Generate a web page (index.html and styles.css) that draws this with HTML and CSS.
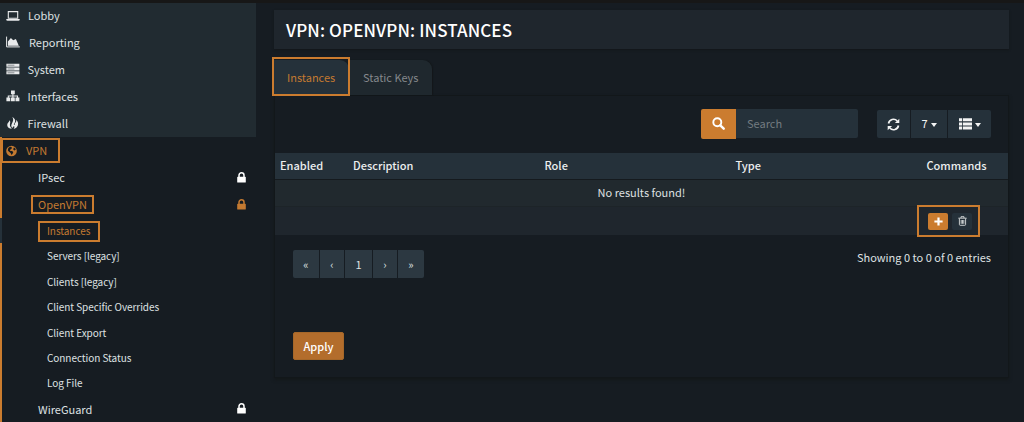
FILE: index.html
```html
<!DOCTYPE html>
<html lang="en">
<head>
<meta charset="utf-8">
<title>VPN: OpenVPN: Instances</title>
<link rel="stylesheet" href="styles.css">
</head>
<body>
<div class="app">
  <nav class="sidebar">
    <ul class="menu">
      <li class="item item-lobby"><svg class="icon" viewBox="0 0 14 12"><path d="M2.3 1.6h9.4v6.6H2.3z" fill="none" stroke="currentColor" stroke-width="1.1"/><path d="M.3 9h13.4v.8q0 .9-1.2.9h-11q-1.2 0-1.2-.9z" fill="currentColor"/></svg><span>Lobby</span></li>
      <li class="item item-reporting"><svg class="icon" viewBox="0 0 14 12"><path d="M.6 .6v10.3h13.2" fill="none" stroke="currentColor" stroke-width="1"/><path d="M1.9 9.7V5.600l3-3.700 2.300 2.300 2.700-1.200 2.900 6.700z" fill="currentColor"/></svg><span>Reporting</span></li>
      <li class="item item-system"><svg class="icon" viewBox="0 0 14 12"><path d="M.4.7h13v3H.4zM.4 4.500h13v3H.4zM.4 8.300h13v3H.4z" fill="currentColor"/><path d="M1.600 2.200h6.800M1.600 6h6.800M1.600 9.800h6.800" stroke="#222b31" stroke-width=".5"/></svg><span>System</span></li>
      <li class="item item-interfaces"><svg class="icon" viewBox="0 0 14 12"><path d="M5 .6h3.800v3.700H5zM.4 7.500h3.900v3.700H.4zM5 7.500h3.800v3.700H5zM9.500 7.500h3.900v3.700H9.500z" fill="currentColor"/><path d="M6.900 4v4M2.300 8V6h9.200v2" fill="none" stroke="currentColor" stroke-width="1.100"/></svg><span>Interfaces</span></li>
      <li class="item item-firewall"><svg class="icon" viewBox="0 0 14 12"><path d="M6.300 0C8.500 1.300 9.800 3 9 5 8.500 6.300 7.500 7 8 8.300c.8-.5 1.100-1.200.9-2.200C10.200 5.200 10.600 4 10.100 2.700c1.700 1.300 2.400 3.500 1.800 5.500-.6 2-2.300 3.300-4.400 3.700 1-1.100 1.100-2 .5-3-.5.700-1.300.9-1.500 2.100C5 10 5 8.200 5.800 6.700 7 4.600 8 2.500 6.300 0z" fill="currentColor"/><path d="M3.400 3.300c1.500 1.500.6 2.800.5 4.300-.1 1.600.8 2.900 2 4.200C3.200 11.600 1.200 10.200 1.200 7.900c0-1.900 2.200-2.700 2.200-4.600z" fill="currentColor"/></svg><span>Firewall</span></li>
    </ul>
    <ul class="open-section">
      <li class="item item-vpn active"><svg class="icon" viewBox="0 0 14 12"><circle cx="5.500" cy="6" r="5.300" fill="currentColor"/><path d="M2.300 3l1.700-1.200 1.400.3.600 1-1 1.100-1.200.9.600.8 1.600.1 1.300 1.100-.7 1.600-1.100 1.200-.9-1.800-1.800-1.700-1-.9zM7.600 2.700l1.300.1.900 1.800-1.100.8-1.400-.7z" fill="#161c22"/></svg><span>VPN</span></li>
      <li class="sub">IPsec<svg class="lock" viewBox="0 0 9 11"><path d="M2 5V3.300a2.500 2.500 0 0 1 5 0V5" fill="none" stroke="currentColor" stroke-width="1.500"/><rect x=".2" y="4.800" width="8.600" height="5.700" rx=".6" fill="currentColor"/></svg></li>
      <li class="sub active">OpenVPN<svg class="lock" viewBox="0 0 9 11"><path d="M2 5V3.300a2.500 2.500 0 0 1 5 0V5" fill="none" stroke="currentColor" stroke-width="1.500"/><rect x=".2" y="4.800" width="8.600" height="5.700" rx=".6" fill="currentColor"/></svg></li>
      <li class="leaf active current">Instances</li>
      <li class="leaf">Servers [legacy]</li>
      <li class="leaf">Clients [legacy]</li>
      <li class="leaf">Client Specific Overrides</li>
      <li class="leaf">Client Export</li>
      <li class="leaf">Connection Status</li>
      <li class="leaf">Log File</li>
      <li class="sub">WireGuard<svg class="lock" viewBox="0 0 9 11"><path d="M2 5V3.300a2.500 2.500 0 0 1 5 0V5" fill="none" stroke="currentColor" stroke-width="1.500"/><rect x=".2" y="4.800" width="8.600" height="5.700" rx=".6" fill="currentColor"/></svg></li>
    </ul>
  </nav>
  <main class="main">
    <header class="page-head"><h1>VPN: OPENVPN: INSTANCES</h1></header>
    <div class="tabs"><div class="tab tab-on">Instances</div><div class="tab tab-off">Static Keys</div></div>
    <section class="panel">
      <div class="toolbar">
        <div class="search">
          <span class="search-btn"><svg width="13" height="13" viewBox="0 0 13 13"><circle cx="5.300" cy="5.300" r="4" fill="none" stroke="currentColor" stroke-width="1.900"/><path d="M8.300 8.300l3.400 3.400" stroke="currentColor" stroke-width="2.400" stroke-linecap="round"/></svg></span>
          <span class="search-field">Search</span>
        </div>
        <div class="actions">
          <span class="act act-refresh"><svg width="13" height="13" viewBox="0 0 13 13"><path d="M1.500 5.500A5 5 0 0 1 10.200 3M11.500 7.500A5 5 0 0 1 2.800 10" fill="none" stroke="currentColor" stroke-width="1.700"/><path d="M12.300.7v4.400H7.900zM.7 12.300V7.900h4.400z" fill="currentColor"/></svg></span>
          <span class="act act-rows"><span>7</span><i class="caret"></i></span>
          <span class="act act-cols"><svg width="13" height="12" viewBox="0 0 13 12"><path d="M0 .2h3.200v3H0zM4 .2h9v3H4zM0 4.400h3.200v3H0zM4 4.400h9v3H4zM0 8.600h3.200v3H0zM4 8.600h9v3H4z" fill="currentColor"/></svg><i class="caret"></i></span>
        </div>
      </div>
      <div class="row row-head"><span>Enabled</span><span>Description</span><span>Role</span><span>Type</span><span>Commands</span></div>
      <div class="row-empty">No results found!</div>
      <div class="row-foot">
        <span class="mini mini-add"><svg width="9" height="9" viewBox="0 0 9 9"><path d="M4.500.4v8.200M.4 4.500h8.200" stroke="currentColor" stroke-width="2.200"/></svg></span>
        <span class="mini mini-del"><svg width="9" height="10" viewBox="0 0 9 10"><path d="M.3 2.200h8.400M3 2V.7h3V2M1.400 2.500v6q0 .8.800.8h4.600q.8 0 .8-.8v-6M3.200 4v3.800M4.500 4v3.800M5.800 4v3.800" fill="none" stroke="currentColor" stroke-width=".9"/></svg></span>
      </div>
      <div class="footer">
        <div class="pager"><span class="pg pg-edge">«</span><span class="pg pg-step">‹</span><span class="pg pg-num">1</span><span class="pg pg-step">›</span><span class="pg pg-edge">»</span></div>
        <div class="info">Showing 0 to 0 of 0 entries</div>
      </div>
      <button class="apply">Apply</button>
    </section>
  </main>
  <i class="mark mark-vpn"></i>
  <i class="mark mark-openvpn"></i>
  <i class="mark mark-leaf"></i>
  <i class="mark mark-tab"></i>
  <i class="mark mark-commands"></i>
</div>
</body>
</html>
```
FILE: styles.css
```css
* { box-sizing: border-box; }
body {
  margin: 0;
  background: #161c22;
  color: #dfe1e2;
  font: 11px/16px "Noto Sans CJK SC", "Noto Sans", sans-serif;
}
ul { list-style: none; margin: 0; padding: 0; }
.app {
  position: relative;
  display: flex;
  width: 1024px;
  height: 422px;
  overflow: hidden;
  border-top: 3px solid #171717;
}
.sidebar { width: 257px; flex: none; }
.menu { background: #212b31; height: 134px; width: 256px; }
.item { display: flex; align-items: center; height: 27px; padding: 0 0 1px 6px; }
.menu .item:first-child { height: 26px; }
.item span { padding-bottom: 1px; }
.icon { width: 14px; height: 12px; flex: none; margin-right: 8px; color: #e8eaeb; }
.item-reporting .icon { margin-right: 9px; }
.item-interfaces .icon, .item-firewall .icon, .item-system .icon { margin-right: 7.500px; }
.open-section { border-left: 2px solid #cb7c2f; height: 288px; background: #161c22; }
.item-vpn { padding: 0 0 0 4px; height: 27px; }
.item-vpn .icon { margin-right: 6px; }
.active, .active .icon { color: #c47a31; }
.sub { display: flex; align-items: center; justify-content: space-between; height: 27px; padding: 0 11px 1px 36px; }
.lock { width: 9px; height: 11px; color: #fff; }
.active .lock { color: #c47a31; }
.leaf { height: 25.400px; line-height: 25.400px; padding-left: 45px; font-size: 10px; letter-spacing: -.06px; }
.current { margin-left: -2px; padding-left: 45px; border-left: 2px solid #25313a; }

.main { flex: 1; padding: 7px 15px 0 17px; }
.page-head { height: 39px; background: #1f262d; padding-left: 12px; box-shadow: 0 1px 2px #13171a; }
h1 { margin: 0; font-size: 17px; letter-spacing: .12px; line-height: 39px; font-weight: 500; color: #fff; }
.tabs { display: flex; margin-top: 11px; height: 35px; }
.tab { line-height: 35px; font-size: 11px; border-top-right-radius: 9px; }
.tab-on { width: 75px; padding-left: 13px; background: #25313a; color: #c47a31; }
.tab-off { width: 83px; padding-left: 14px; background: #1f282e; color: #85898c; box-shadow: 1px 0 1px #13171a; }
.panel { width: 735px; height: 283px; border: 1px solid #12171a; box-shadow: 0 2px 3px #14181a; }
.toolbar { display: flex; justify-content: flex-end; height: 57px; padding: 13px 17px 0 0; }
.search { display: flex; height: 29px; margin-right: 19px; }
.search-btn { display: flex; align-items: center; justify-content: center; width: 35px; height: 30px; margin-top: -.5px; background: #cb7c2f; color: #fff; border-radius: 2px 0 0 2px; }
.search-field { width: 122px; padding-left: 11px; background: #25313a; color: #737b80; line-height: 28px; border-radius: 0 2px 2px 0; }
.actions { display: flex; gap: 1px; height: 28px; margin-top: 1px; }
.act { display: flex; align-items: center; justify-content: center; background: #25313a; color: #f3f4f4; }
.act-refresh { width: 33px; border-radius: 2px 0 0 2px; }
.act-rows { width: 36px; }
.act-rows span { padding-bottom: 2px; }
.act-cols { width: 43px; border-radius: 0 2px 2px 0; }
.caret { border: 3.500px solid transparent; border-top: 4px solid #f3f4f4; border-bottom: 0; margin: 2px 0 0 3px; }
.row-head { display: grid; grid-template-columns: 73px 191.500px 191px 191px 1fr; height: 26px; line-height: 25px; padding-left: 5px; background: #25313a; font-weight: 500; color: #eceeef; }
.row-empty { height: 28px; border-top: 1px solid #151a1e; border-bottom: 1px solid #1d2428; background: #21292e; text-align: center; line-height: 24px; }
.row-foot { display: flex; align-items: center; gap: 4px; height: 28px; padding-left: 653px; background: #1f262d; }
.mini { display: flex; align-items: center; justify-content: center; width: 20px; height: 17px; border-radius: 2px; }
.mini-add { background: #cb7c2f; color: #fff; }
.mini-del { background: #25313a; color: #d9dcdd; }
.footer { display: flex; justify-content: space-between; padding: 15px 17px 0 18px; }
.pager { display: flex; gap: 1px; height: 28px; border-radius: 2px; overflow: hidden; }
.pg { background: #2c3841; text-align: center; line-height: 28px; }
.pg-edge { width: 26px; }
.pg-step { width: 24px; }
.pg-num { width: 27px; }
.info { height: 16px; margin-top: -1px; }
.apply { display: block; margin: 54px 0 0 18px; width: 51px; height: 28px; padding: 0; border: 1px solid #a56729; border-radius: 2px; background: #b36d2c; color: #fff; font: 500 11px/26px "Noto Sans CJK SC", sans-serif; }

/* Highlight frames laid over the controls */
.mark { position: absolute; border: 2px solid #cb7c2f; }
.mark-vpn { left: 1px; top: 135px; width: 59px; height: 25px; }
.mark-openvpn { left: 31px; top: 192px; width: 63px; height: 19px; }
.mark-leaf { left: 38px; top: 218px; width: 62px; height: 21px; }
.mark-tab { left: 272px; top: 54px; width: 78px; height: 39px; }
.mark-commands { left: 917px; top: 202px; width: 63px; height: 32px; }
```
